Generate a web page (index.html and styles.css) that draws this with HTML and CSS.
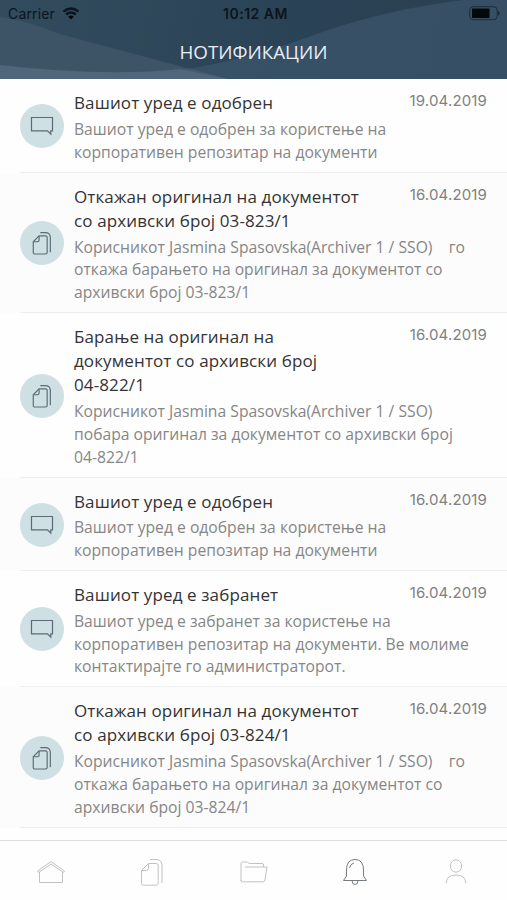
FILE: index.html
```html
<!DOCTYPE html>
<html lang="mk">
  <head>
    <meta charset="utf-8">
    <meta name="viewport" content="width=device-width, initial-scale=1">
    <title>Нотификации</title>
    <link rel="stylesheet" href="styles.css">
  </head>
  <body>

    <svg class="sprite" width="0" height="0">
      <symbol id="message" viewBox="0 0 24 20">
        <path d="M1.500 1.500h21v13.300h-1.700v3.200l-3.400-3.200H1.500z"/>
      </symbol>
      <symbol id="documents" viewBox="0 0 24 28">
        <path d="M8.500 5.500h7.700q2 0 2 2v17.700q0 2-2 2H3.500q-2 0-2-2V12.500z"/>
        <path d="M8.500 5.500v5q0 2-2 2h-5M10 1.500h6q6 0 6 6V25"/>
      </symbol>
      <symbol id="home" viewBox="0 0 30 24">
        <path d="M1.500 11L15 1.600 28.500 11l-1.200 1.400L15 4 2.700 12.400z"/>
        <path d="M3.500 12v10.500h23V12"/>
      </symbol>
      <symbol id="folder" viewBox="0 0 30 24">
        <path d="M2 21V3.500Q2 2 3.500 2h3.700q1.500 0 3 1.500H23q1.500 0 1.500 1.500v2"/>
        <path d="M6 7h22l-2 13q-.3 1.800-2 1.800H3.500Q2 21.800 2 20"/>
      </symbol>
      <symbol id="bell" viewBox="0 0 26 28">
        <path d="M4.500 12q0-10.500 8.500-10.500T21.500 12v6l3 4.500h-23l3-4.500z"/>
        <path d="M10 22.500q0 4 3 4t3-4M7.500 10q.8-4 4.500-5.200"/>
      </symbol>
      <symbol id="person" viewBox="0 0 24 28">
        <ellipse cx="12" cy="8" rx="5.600" ry="6.200"/>
        <path d="M2.300 25q0-8 9.700-8t9.700 8"/>
      </symbol>
    </svg>

    <header class="header">
      <svg class="waves" viewBox="0 0 507 79" preserveAspectRatio="none">
        <path class="wave-left" d="M0 17Q25 20 60 34L228 79H0z"/>
        <path class="wave-right" d="M180 70Q245 61 325 31Q390 9 463 0H507V79H225z"/>
        <path class="wave-bottom" d="M0 65Q105 77 180 69L228 79H0z"/>
      </svg>
      <div class="status">
        <div class="carrier">
          Carrier
          <svg class="wifi" viewBox="0 0 18 13">
            <path d="M1.500 4.600q7.500-6.200 15 0M4.200 7.500q4.800-4 9.600 0"/>
            <path class="dot" d="M6.200 9.800q2.800-2.400 5.600 0L9 12.600z"/>
          </svg>
        </div>
        <div class="time">10:12 AM</div>
        <svg class="battery" viewBox="0 0 32 15">
          <rect x=".7" y=".7" width="27.500" height="13" rx="3.500"/>
          <path class="charge" d="M3 2.500h17.500v9.500H3z"/>
          <path class="charge" d="M29.500 5q2 2.200 0 4.400z"/>
        </svg>
      </div>
      <h1>НОТИФИКАЦИИ</h1>
    </header>

    <main class="list">
      <article class="item">
        <div class="icon"><svg class="message"><use href="#message"/></svg></div>
        <div class="content">
          <h2>Вашиот уред е одобрен</h2>
          <p>Вашиот уред е одобрен за користење на<br>корпоративен репозитар на документи</p>
        </div>
        <time>19.04.2019</time>
      </article>
      <article class="item">
        <div class="icon"><svg class="documents"><use href="#documents"/></svg></div>
        <div class="content">
          <h2>Откажан оригинал на документот<br>со архивски број 03-823/1</h2>
          <p>Корисникот Jasmina Spasovska(Archiver 1 / SSO) &nbsp;&nbsp; го<br>откажа барањето на оригинал за документот со<br>архивски број 03-823/1</p>
        </div>
        <time>16.04.2019</time>
      </article>
      <article class="item">
        <div class="icon"><svg class="documents"><use href="#documents"/></svg></div>
        <div class="content">
          <h2>Барање на оригинал на<br>документот со архивски број<br>04-822/1</h2>
          <p>Корисникот Jasmina Spasovska(Archiver 1 / SSO)<br>побара оригинал за документот со архивски број<br>04-822/1</p>
        </div>
        <time>16.04.2019</time>
      </article>
      <article class="item">
        <div class="icon"><svg class="message"><use href="#message"/></svg></div>
        <div class="content">
          <h2>Вашиот уред е одобрен</h2>
          <p>Вашиот уред е одобрен за користење на<br>корпоративен репозитар на документи</p>
        </div>
        <time>16.04.2019</time>
      </article>
      <article class="item">
        <div class="icon"><svg class="message"><use href="#message"/></svg></div>
        <div class="content">
          <h2>Вашиот уред е забранет</h2>
          <p>Вашиот уред е забранет за користење на<br>корпоративен репозитар на документи. Ве молиме<br>контактирајте го администраторот.</p>
        </div>
        <time>16.04.2019</time>
      </article>
      <article class="item">
        <div class="icon"><svg class="documents"><use href="#documents"/></svg></div>
        <div class="content">
          <h2>Откажан оригинал на документот<br>со архивски број 03-824/1</h2>
          <p>Корисникот Jasmina Spasovska(Archiver 1 / SSO) &nbsp;&nbsp; го<br>откажа барањето на оригинал за документот со<br>архивски број 03-824/1</p>
        </div>
        <time>16.04.2019</time>
      </article>
    </main>

    <nav class="tabs">
      <a><svg class="home"><use href="#home"/></svg></a>
      <a><svg class="docs"><use href="#documents"/></svg></a>
      <a><svg class="folder"><use href="#folder"/></svg></a>
      <a class="active"><svg class="bell"><use href="#bell"/></svg></a>
      <a><svg class="person"><use href="#person"/></svg></a>
    </nav>

  </body>
</html>
```
FILE: styles.css
```css
* {
    box-sizing: border-box;
}

body {
    margin: 0;
    height: 900px;
    display: flex;
    flex-direction: column;
    overflow: hidden;
    background: #fefefe;
    font-family: "Open Sans", "Noto Sans", sans-serif;
    font-feature-settings: "locl" 0;
}

h1,
h2,
p {
    margin: 0;
    font-weight: 400;
    white-space: nowrap;
}

svg {
    display: block;
    fill: none;
    stroke: currentColor;
}

.sprite {
    position: absolute;
}

.header {
    position: relative;
    flex: none;
    height: 79px;
    background: linear-gradient(100deg, #324c5e, #2a4255 60%, #2b4154);
}

.waves {
    position: absolute;
    inset: 0;
    width: 100%;
    height: 100%;
    stroke: none;
}

.wave-left {
    fill: #3d5366;
}

.wave-right {
    fill: #52708a;
    opacity: 0.3;
}

.wave-bottom {
    fill: #50667a;
}

.status {
    position: relative;
    display: grid;
    grid-template-columns: 1fr auto 1fr;
    align-items: center;
    height: 27px;
    padding: 0 6px 0 8px;
    font: 14px Inter, sans-serif;
    letter-spacing: 0.15px;
    color: #0b141c;
}

.carrier {
    display: flex;
    align-items: center;
    gap: 7px;
}

.wifi {
    width: 18px;
    height: 13px;
    stroke-width: 2.4;
}

.wifi .dot,
.charge {
    fill: #05080b;
    stroke: none;
}

.time {
    padding-left: 2px;
    font-weight: 600;
    letter-spacing: 0.5px;
}

.battery {
    width: 32px;
    height: 15px;
    justify-self: end;
    stroke: #1c2c39;
}

h1 {
    position: relative;
    padding-top: 12px;
    text-align: center;
    font-size: 18.800px;
    line-height: 26px;
    color: #e9edf4;
}

.list {
    flex: 1;
    min-height: 0;
    overflow: hidden;
}

.item {
    position: relative;
    display: flex;
    padding: 12px 20px 9.300px;
}

.item:nth-child(even) {
    background: #fcfcfc;
}

.item::after {
    content: "";
    position: absolute;
    left: 20px;
    right: 0;
    bottom: 0;
    height: 1px;
    background: #eee;
}

.icon {
    flex: none;
    align-self: center;
    display: flex;
    align-items: center;
    justify-content: center;
    width: 44px;
    height: 44px;
    margin: 0 9.600px 2px 0.400px;
    border-radius: 50%;
    background: #cfe0e5;
    color: #5b6b74;
}

.message {
    width: 24px;
    height: 20px;
    stroke-width: 1.2;
}

.documents {
    width: 20px;
    height: 24px;
    stroke-width: 1.4;
}

.content {
    flex: 1;
    min-width: 0;
}

h2 {
    font-size: 17px;
    line-height: 24.200px;
    letter-spacing: 0.12px;
    color: #333;
}

p {
    margin-top: 2.600px;
    font-size: 15.700px;
    line-height: 22.700px;
    color: #868686;
}

time {
    flex: none;
    width: 80px;
    margin-left: -80px;
    font: 15px/20px Inter, sans-serif;
    letter-spacing: 0.15px;
    text-align: right;
    color: #808080;
}

.tabs {
    flex: none;
    display: flex;
    height: 60px;
    border-top: 1px solid #ddd;
    background: #fefefe;
    color: #c2c2c2;
}

.tabs a {
    flex: 1;
    display: flex;
    align-items: center;
    justify-content: center;
    padding-top: 3px;
}

.tabs .active {
    color: #777c82;
}

.home,
.folder {
    width: 30px;
    height: 24px;
}

.docs,
.person {
    width: 24px;
    height: 28px;
}

.bell {
    width: 26px;
    height: 28px;
}
```
